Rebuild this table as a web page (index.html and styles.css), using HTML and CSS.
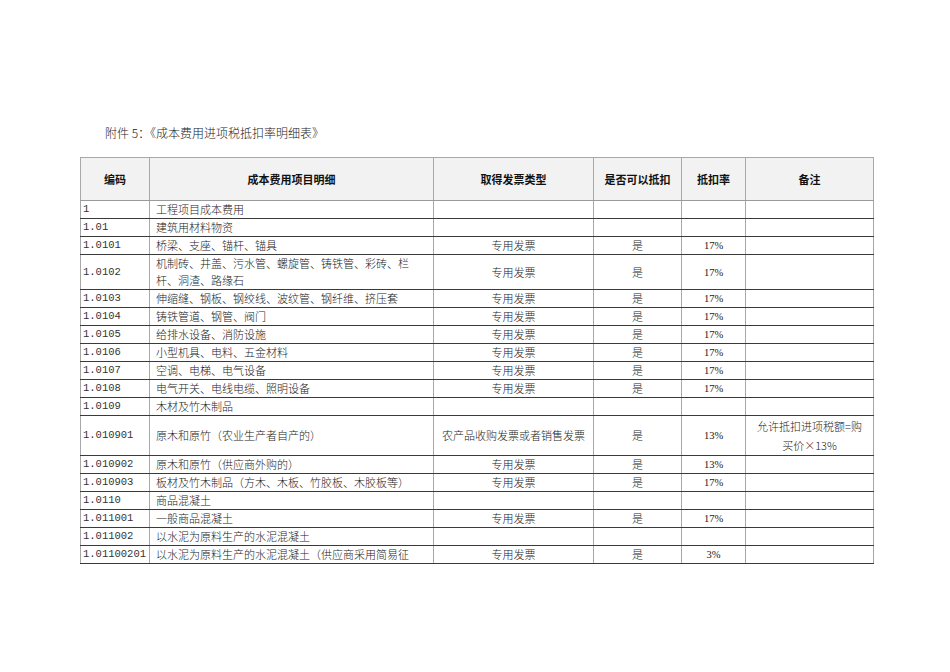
FILE: index.html
```html
<!DOCTYPE html>
<html lang="zh-CN">
<head>
<meta charset="utf-8">
<title>成本费用进项税抵扣率明细表</title>
<link rel="stylesheet" href="styles.css">
</head>
<body>
<div class="page">
  <p class="title">附件 5：《成本费用进项税抵扣率明细表》</p>
  <table class="sheet">
    <colgroup>
      <col class="c-code"><col class="c-item"><col class="c-inv"><col class="c-yes"><col class="c-rate"><col class="c-note">
    </colgroup>
    <thead>
      <tr>
        <th>编码</th><th>成本费用项目明细</th><th>取得发票类型</th><th>是否可以抵扣</th><th>抵扣率</th><th>备注</th>
      </tr>
    </thead>
    <tbody>
      <tr><td class="code">1</td><td class="item">工程项目成本费用</td><td></td><td></td><td></td><td></td></tr>
      <tr><td class="code">1.01</td><td class="item">建筑用材料物资</td><td></td><td></td><td></td><td></td></tr>
      <tr><td class="code">1.0101</td><td class="item">桥梁、支座、锚杆、锚具</td><td class="ctr">专用发票</td><td class="ctr">是</td><td class="rate">17%</td><td></td></tr>
      <tr class="tall"><td class="code">1.0102</td><td class="item">机制砖、井盖、污水管、螺旋管、铸铁管、彩砖、栏<br>杆、洞渣、路缘石</td><td class="ctr">专用发票</td><td class="ctr">是</td><td class="rate">17%</td><td></td></tr>
      <tr><td class="code">1.0103</td><td class="item">伸缩缝、钢板、钢绞线、波纹管、钢纤维、挤压套</td><td class="ctr">专用发票</td><td class="ctr">是</td><td class="rate">17%</td><td></td></tr>
      <tr><td class="code">1.0104</td><td class="item">铸铁管道、钢管、阀门</td><td class="ctr">专用发票</td><td class="ctr">是</td><td class="rate">17%</td><td></td></tr>
      <tr><td class="code">1.0105</td><td class="item">给排水设备、消防设施</td><td class="ctr">专用发票</td><td class="ctr">是</td><td class="rate">17%</td><td></td></tr>
      <tr><td class="code">1.0106</td><td class="item">小型机具、电料、五金材料</td><td class="ctr">专用发票</td><td class="ctr">是</td><td class="rate">17%</td><td></td></tr>
      <tr><td class="code">1.0107</td><td class="item">空调、电梯、电气设备</td><td class="ctr">专用发票</td><td class="ctr">是</td><td class="rate">17%</td><td></td></tr>
      <tr><td class="code">1.0108</td><td class="item">电气开关、电线电缆、照明设备</td><td class="ctr">专用发票</td><td class="ctr">是</td><td class="rate">17%</td><td></td></tr>
      <tr><td class="code">1.0109</td><td class="item">木材及竹木制品</td><td></td><td></td><td></td><td></td></tr>
      <tr class="taller"><td class="code">1.010901</td><td class="item">原木和原竹（农业生产者自产的）</td><td class="ctr">农产品收购发票或者销售发票</td><td class="ctr">是</td><td class="rate">13%</td><td class="note">允许抵扣进项税额=购<br>买价×13%</td></tr>
      <tr><td class="code">1.010902</td><td class="item">原木和原竹（供应商外购的）</td><td class="ctr">专用发票</td><td class="ctr">是</td><td class="rate">13%</td><td></td></tr>
      <tr><td class="code">1.010903</td><td class="item">板材及竹木制品（方木、木板、竹胶板、木胶板等）</td><td class="ctr">专用发票</td><td class="ctr">是</td><td class="rate">17%</td><td></td></tr>
      <tr><td class="code">1.0110</td><td class="item">商品混凝土</td><td></td><td></td><td></td><td></td></tr>
      <tr><td class="code">1.011001</td><td class="item">一般商品混凝土</td><td class="ctr">专用发票</td><td class="ctr">是</td><td class="rate">17%</td><td></td></tr>
      <tr><td class="code">1.011002</td><td class="item">以水泥为原料生产的水泥混凝土</td><td></td><td></td><td></td><td></td></tr>
      <tr><td class="code">1.01100201</td><td class="item">以水泥为原料生产的水泥混凝土（供应商采用简易征</td><td class="ctr">专用发票</td><td class="ctr">是</td><td class="rate">3%</td><td></td></tr>
    </tbody>
  </table>
</div>
</body>
</html>
```

FILE: styles.css
```css
html, body {
  margin: 0;
  padding: 0;
  background: #ffffff;
}

.page {
  padding: 125px 0 0 80px;
  font-family: "Noto Sans CJK SC", "Noto Sans", sans-serif;
  font-weight: 300;
  color: #1a1a1a;
}

.title {
  margin: 0 0 17px 25px;
  font-size: 12px;
  line-height: 15px;
  height: 15px;
}

.sheet {
  border-collapse: collapse;
  table-layout: fixed;
  width: 793px;
  font-size: 11px;
}

.c-code { width: 69px; }
.c-item { width: 284px; }
.c-inv  { width: 160px; }
.c-yes  { width: 88px; }
.c-rate { width: 64px; }
.c-note { width: 128px; }

.sheet th,
.sheet td {
  border-left: 1px solid #a8a8a8;
  border-right: 1px solid #a8a8a8;
  padding: 0 2px;
}

.sheet th {
  background: #f2f2f2;
  font-weight: 700;
  height: 42px;
  border-top: 1px solid #a8a8a8;
  border-bottom: 1px solid #9a9a9a;
  text-align: center;
  color: #111;
}

.sheet td {
  height: 17px;
  line-height: 17px;
  border-bottom: 1px solid #3a3a3a;
  white-space: nowrap;
  overflow: hidden;
}

.sheet tr.tall td {
  height: 34px;
  white-space: normal;
}

.sheet tr.taller td {
  height: 39px;
  line-height: 19px;
  white-space: normal;
}

.code {
  font-family: "Liberation Mono", "DejaVu Sans Mono", monospace;
  font-size: 10.5px;
  color: #333;
}

.item {
  padding-left: 6px !important;
}

.ctr {
  text-align: center;
}

.rate {
  text-align: center;
  font-family: "Liberation Serif", serif;
  font-size: 10.5px;
}

.note {
  text-align: center;
}
```
